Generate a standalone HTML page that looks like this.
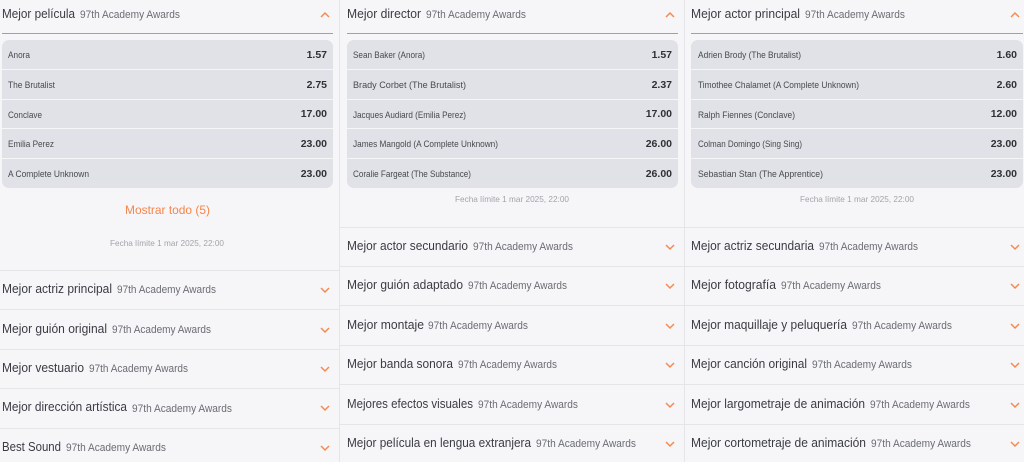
<!DOCTYPE html>
<html><head><meta charset="utf-8">
<style>
html,body{margin:0;padding:0;background:#f6f6f9;width:1024px;height:462px;overflow:hidden;position:relative}
svg{display:block;font-family:"Liberation Sans",sans-serif;filter:blur(.3px)}
.t{font-size:13px;fill:#3a3c42}
.s{font-size:11px;fill:#6b6d73}
.n{font-size:9px;fill:#47494f}
.o{font-size:10.5px;font-weight:700;fill:#2f3136;text-anchor:end}
.f{font-size:8.5px;fill:#a3a4a9}
.c{fill:none;stroke:#f5894f;stroke-width:1.5}
.l{stroke:#e5e5e9;stroke-width:1}
.w{stroke:#f6f6f9;stroke-width:1}
.p{fill:#e1e2e7}
.bar{position:absolute;top:33px;height:1px;background:#f4874b;z-index:2}
</style></head><body>
<svg width="1024" height="462" viewBox="0 0 1024 462" xmlns="http://www.w3.org/2000/svg">
<rect width="1024" height="462" fill="#f6f6f9"/>
<line class="l" x1="339.5" y1="0" x2="339.5" y2="462"/>
<line class="l" x1="684.5" y1="0" x2="684.5" y2="462"/>

<!-- Column 1 -->
<text class="t" x="2" y="18" textLength="73" lengthAdjust="spacingAndGlyphs">Mejor película</text>
<text class="s" x="80" y="18" textLength="100" lengthAdjust="spacingAndGlyphs">97th Academy Awards</text>
<path class="c" d="M321 17l4-4 4 4"/>
<rect class="p" x="2" y="40" width="331" height="148" rx="7"/>
<line class="w" x1="2" y1="69.5" x2="333" y2="69.5"/>
<line class="w" x1="2" y1="99.5" x2="333" y2="99.5"/>
<line class="w" x1="2" y1="128.5" x2="333" y2="128.5"/>
<line class="w" x1="2" y1="158.5" x2="333" y2="158.5"/>
<text class="n" x="8" y="58" textLength="22" lengthAdjust="spacingAndGlyphs">Anora</text><text class="o" x="327" y="58">1.57</text>
<text class="n" x="8" y="88" textLength="47" lengthAdjust="spacingAndGlyphs">The Brutalist</text><text class="o" x="327" y="88">2.75</text>
<text class="n" x="8" y="118" textLength="34" lengthAdjust="spacingAndGlyphs">Conclave</text><text class="o" x="327" y="117">17.00</text>
<text class="n" x="8" y="147" textLength="46" lengthAdjust="spacingAndGlyphs">Emilia Perez</text><text class="o" x="327" y="147">23.00</text>
<text class="n" x="8" y="177" textLength="81" lengthAdjust="spacingAndGlyphs">A Complete Unknown</text><text class="o" x="327" y="177">23.00</text>
<text x="125" y="214" font-size="12" fill="#f6854a" textLength="85" lengthAdjust="spacingAndGlyphs">Mostrar todo (5)</text>
<text class="f" x="110" y="246" textLength="114" lengthAdjust="spacingAndGlyphs">Fecha límite 1 mar 2025, 22:00</text>
<line class="l" x1="0" y1="270.5" x2="339" y2="270.5"/>
<line class="l" x1="0" y1="309.5" x2="339" y2="309.5"/>
<line class="l" x1="0" y1="349.5" x2="339" y2="349.5"/>
<line class="l" x1="0" y1="388.5" x2="339" y2="388.5"/>
<line class="l" x1="0" y1="428.5" x2="339" y2="428.5"/>
<text class="t" x="2" y="293" textLength="110" lengthAdjust="spacingAndGlyphs">Mejor actriz principal</text><text class="s" x="117" y="293" textLength="99" lengthAdjust="spacingAndGlyphs">97th Academy Awards</text><path class="c" d="M321 288l4 4 4-4"/>
<text class="t" x="2" y="333" textLength="105" lengthAdjust="spacingAndGlyphs">Mejor guión original</text><text class="s" x="112" y="333" textLength="99" lengthAdjust="spacingAndGlyphs">97th Academy Awards</text><path class="c" d="M321 328l4 4 4-4"/>
<text class="t" x="2" y="372" textLength="82" lengthAdjust="spacingAndGlyphs">Mejor vestuario</text><text class="s" x="89" y="372" textLength="99" lengthAdjust="spacingAndGlyphs">97th Academy Awards</text><path class="c" d="M321 367l4 4 4-4"/>
<text class="t" x="2" y="411" textLength="125" lengthAdjust="spacingAndGlyphs">Mejor dirección artística</text><text class="s" x="132" y="412" textLength="100" lengthAdjust="spacingAndGlyphs">97th Academy Awards</text><path class="c" d="M321 406l4 4 4-4"/>
<text class="t" x="2" y="451" textLength="59" lengthAdjust="spacingAndGlyphs">Best Sound</text><text class="s" x="66" y="451" textLength="100" lengthAdjust="spacingAndGlyphs">97th Academy Awards</text><path class="c" d="M321 446l4 4 4-4"/>

<!-- Column 2 -->
<text class="t" x="347" y="18" textLength="74" lengthAdjust="spacingAndGlyphs">Mejor director</text>
<text class="s" x="426" y="18" textLength="100" lengthAdjust="spacingAndGlyphs">97th Academy Awards</text>
<path class="c" d="M666 17l4-4 4 4"/>
<rect class="p" x="347" y="40" width="331" height="148" rx="7"/>
<line class="w" x1="347" y1="69.5" x2="678" y2="69.5"/>
<line class="w" x1="347" y1="99.5" x2="678" y2="99.5"/>
<line class="w" x1="347" y1="128.5" x2="678" y2="128.5"/>
<line class="w" x1="347" y1="158.5" x2="678" y2="158.5"/>
<text class="n" x="353" y="58" textLength="72" lengthAdjust="spacingAndGlyphs">Sean Baker (Anora)</text><text class="o" x="672" y="58">1.57</text>
<text class="n" x="353" y="88" textLength="113" lengthAdjust="spacingAndGlyphs">Brady Corbet (The Brutalist)</text><text class="o" x="672" y="88">2.37</text>
<text class="n" x="353" y="118" textLength="113" lengthAdjust="spacingAndGlyphs">Jacques Audiard (Emilia Perez)</text><text class="o" x="672" y="117">17.00</text>
<text class="n" x="353" y="147" textLength="145" lengthAdjust="spacingAndGlyphs">James Mangold (A Complete Unknown)</text><text class="o" x="672" y="147">26.00</text>
<text class="n" x="353" y="177" textLength="118" lengthAdjust="spacingAndGlyphs">Coralie Fargeat (The Substance)</text><text class="o" x="672" y="177">26.00</text>
<text class="f" x="455" y="202" textLength="114" lengthAdjust="spacingAndGlyphs">Fecha límite 1 mar 2025, 22:00</text>
<line class="l" x1="340" y1="227.5" x2="684" y2="227.5"/>
<line class="l" x1="340" y1="266.5" x2="684" y2="266.5"/>
<line class="l" x1="340" y1="305.5" x2="684" y2="305.5"/>
<line class="l" x1="340" y1="345.5" x2="684" y2="345.5"/>
<line class="l" x1="340" y1="384.5" x2="684" y2="384.5"/>
<line class="l" x1="340" y1="424.5" x2="684" y2="424.5"/>
<text class="t" x="347" y="250" textLength="121" lengthAdjust="spacingAndGlyphs">Mejor actor secundario</text><text class="s" x="473" y="250" textLength="100" lengthAdjust="spacingAndGlyphs">97th Academy Awards</text><path class="c" d="M666 245l4 4 4-4"/>
<text class="t" x="347" y="289" textLength="116" lengthAdjust="spacingAndGlyphs">Mejor guión adaptado</text><text class="s" x="468" y="289" textLength="99" lengthAdjust="spacingAndGlyphs">97th Academy Awards</text><path class="c" d="M666 284l4 4 4-4"/>
<text class="t" x="347" y="329" textLength="77" lengthAdjust="spacingAndGlyphs">Mejor montaje</text><text class="s" x="428" y="329" textLength="100" lengthAdjust="spacingAndGlyphs">97th Academy Awards</text><path class="c" d="M666 324l4 4 4-4"/>
<text class="t" x="347" y="368" textLength="106" lengthAdjust="spacingAndGlyphs">Mejor banda sonora</text><text class="s" x="458" y="368" textLength="99" lengthAdjust="spacingAndGlyphs">97th Academy Awards</text><path class="c" d="M666 363l4 4 4-4"/>
<text class="t" x="347" y="408" textLength="126" lengthAdjust="spacingAndGlyphs">Mejores efectos visuales</text><text class="s" x="478" y="408" textLength="100" lengthAdjust="spacingAndGlyphs">97th Academy Awards</text><path class="c" d="M666 403l4 4 4-4"/>
<text class="t" x="347" y="447" textLength="184" lengthAdjust="spacingAndGlyphs">Mejor película en lengua extranjera</text><text class="s" x="536" y="447" textLength="100" lengthAdjust="spacingAndGlyphs">97th Academy Awards</text><path class="c" d="M666 442l4 4 4-4"/>

<!-- Column 3 -->
<text class="t" x="691" y="18" textLength="109" lengthAdjust="spacingAndGlyphs">Mejor actor principal</text>
<text class="s" x="805" y="18" textLength="100" lengthAdjust="spacingAndGlyphs">97th Academy Awards</text>
<path class="c" d="M1011 17l4-4 4 4"/>
<rect class="p" x="691" y="40" width="332" height="148" rx="7"/>
<line class="w" x1="691" y1="69.5" x2="1023" y2="69.5"/>
<line class="w" x1="691" y1="99.5" x2="1023" y2="99.5"/>
<line class="w" x1="691" y1="128.5" x2="1023" y2="128.5"/>
<line class="w" x1="691" y1="158.5" x2="1023" y2="158.5"/>
<text class="n" x="698" y="58" textLength="103" lengthAdjust="spacingAndGlyphs">Adrien Brody (The Brutalist)</text><text class="o" x="1017" y="58">1.60</text>
<text class="n" x="698" y="88" textLength="161" lengthAdjust="spacingAndGlyphs">Timothee Chalamet (A Complete Unknown)</text><text class="o" x="1017" y="88">2.60</text>
<text class="n" x="698" y="118" textLength="97" lengthAdjust="spacingAndGlyphs">Ralph Fiennes (Conclave)</text><text class="o" x="1017" y="117">12.00</text>
<text class="n" x="698" y="147" textLength="104" lengthAdjust="spacingAndGlyphs">Colman Domingo (Sing Sing)</text><text class="o" x="1017" y="147">23.00</text>
<text class="n" x="698" y="177" textLength="125" lengthAdjust="spacingAndGlyphs">Sebastian Stan (The Apprentice)</text><text class="o" x="1017" y="177">23.00</text>
<text class="f" x="800" y="202" textLength="114" lengthAdjust="spacingAndGlyphs">Fecha límite 1 mar 2025, 22:00</text>
<line class="l" x1="685" y1="227.5" x2="1024" y2="227.5"/>
<line class="l" x1="685" y1="266.5" x2="1024" y2="266.5"/>
<line class="l" x1="685" y1="305.5" x2="1024" y2="305.5"/>
<line class="l" x1="685" y1="345.5" x2="1024" y2="345.5"/>
<line class="l" x1="685" y1="384.5" x2="1024" y2="384.5"/>
<line class="l" x1="685" y1="424.5" x2="1024" y2="424.5"/>
<text class="t" x="691" y="250" textLength="123" lengthAdjust="spacingAndGlyphs">Mejor actriz secundaria</text><text class="s" x="819" y="250" textLength="99" lengthAdjust="spacingAndGlyphs">97th Academy Awards</text><path class="c" d="M1011 245l4 4 4-4"/>
<text class="t" x="691" y="289" textLength="85" lengthAdjust="spacingAndGlyphs">Mejor fotografía</text><text class="s" x="781" y="289" textLength="100" lengthAdjust="spacingAndGlyphs">97th Academy Awards</text><path class="c" d="M1011 284l4 4 4-4"/>
<text class="t" x="691" y="329" textLength="156" lengthAdjust="spacingAndGlyphs">Mejor maquillaje y peluquería</text><text class="s" x="852" y="329" textLength="100" lengthAdjust="spacingAndGlyphs">97th Academy Awards</text><path class="c" d="M1011 324l4 4 4-4"/>
<text class="t" x="691" y="368" textLength="116" lengthAdjust="spacingAndGlyphs">Mejor canción original</text><text class="s" x="812" y="368" textLength="100" lengthAdjust="spacingAndGlyphs">97th Academy Awards</text><path class="c" d="M1011 363l4 4 4-4"/>
<text class="t" x="691" y="408" textLength="174" lengthAdjust="spacingAndGlyphs">Mejor largometraje de animación</text><text class="s" x="870" y="408" textLength="100" lengthAdjust="spacingAndGlyphs">97th Academy Awards</text><path class="c" d="M1011 403l4 4 4-4"/>
<text class="t" x="691" y="447" textLength="175" lengthAdjust="spacingAndGlyphs">Mejor cortometraje de animación</text><text class="s" x="871" y="447" textLength="100" lengthAdjust="spacingAndGlyphs">97th Academy Awards</text><path class="c" d="M1011 442l4 4 4-4"/>
</svg>
<div class="bar" style="left:2px;width:331px"></div>
<div class="bar" style="left:347px;width:331px"></div>
<div class="bar" style="left:691px;width:332px"></div>
</body></html>
